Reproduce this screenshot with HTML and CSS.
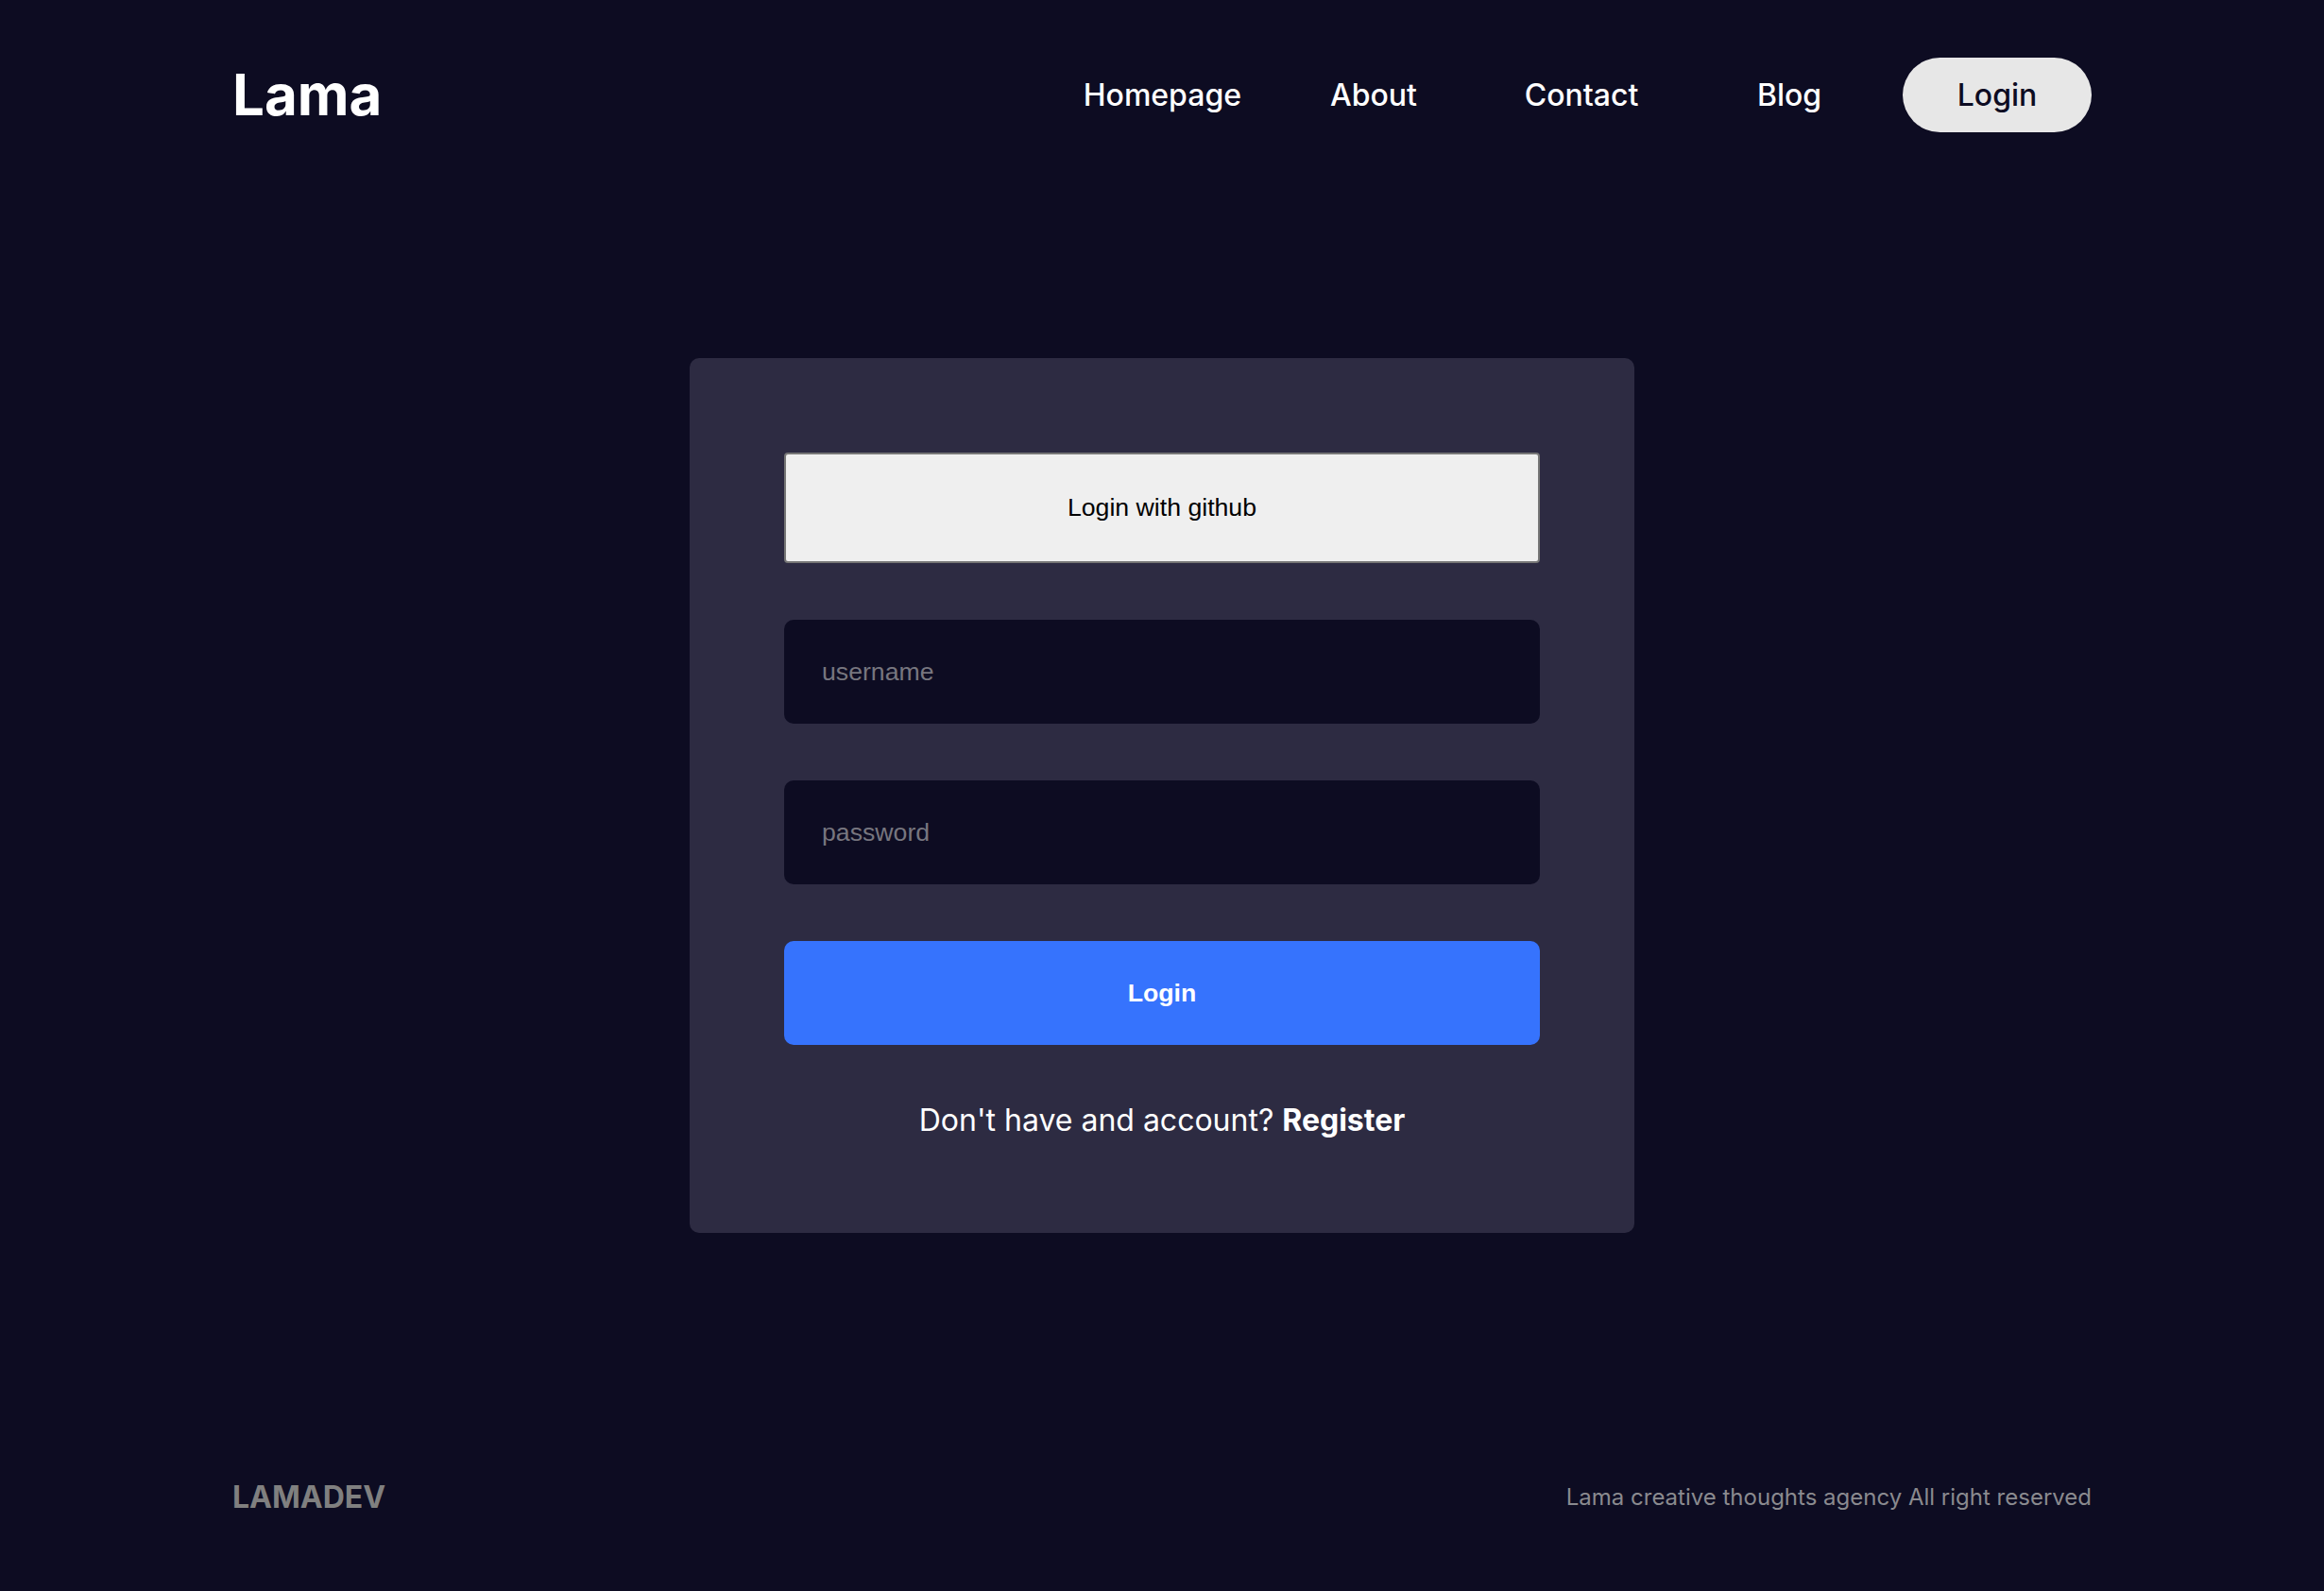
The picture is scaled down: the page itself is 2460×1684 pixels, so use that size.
FILE: index.html
```html
<!DOCTYPE html>
<html lang="en">
<head>
    <meta charset="UTF-8">
    <meta name="viewport" content="width=device-width, initial-scale=1.0">
    <title>Lama - Login</title>
    <link rel="stylesheet" href="styles.css">
</head>
<body>
    <div class="container">

        <header class="navbar">
            <a href="#" class="logo">Lama</a>
            <nav class="links">
                <a href="#" class="link">Homepage</a>
                <a href="#" class="link">About</a>
                <a href="#" class="link">Contact</a>
                <a href="#" class="link">Blog</a>
                <a href="#" class="link active">Login</a>
            </nav>
        </header>

        <main class="main">
            <div class="card">
                <form class="github-form">
                    <button type="button" class="github">Login with github</button>
                </form>
                <form class="login-form">
                    <input type="text" placeholder="username">
                    <input type="password" placeholder="password">
                    <button type="button" class="submit">Login</button>
                    <p class="register">Don't have and account? <b>Register</b></p>
                </form>
            </div>
        </main>

        <footer class="footer">
            <div class="footer-logo">LAMADEV</div>
            <div class="footer-text">Lama creative thoughts agency All right reserved</div>
        </footer>

    </div>
</body>
</html>
```

FILE: styles.css
```css
* {
    box-sizing: border-box;
}
body {
    margin: 0;
    background-color: #0d0c22; /* 深藍底色 */
    color: #ffffff;
    font-family: Inter, "Liberation Sans", sans-serif;
    font-size: 32px;
}
a {
    color: inherit;
    text-decoration: none;
}
.container {
    padding: 0 246px;
    min-height: 100vh;
}

/* 導覽列 */
.navbar {
    height: 200px;
    display: flex;
    align-items: center;
    justify-content: space-between;
}
.logo {
    font-size: 60px;
    font-weight: bold;
}
.links {
    display: flex;
    align-items: center;
    gap: 20px;
}
.link {
    min-width: 200px;
    padding: 20px;
    border-radius: 40px;
    text-align: center;
    font-weight: 500;
}
.link.active {
    background-color: #e7e7e7;
    color: #0d0c22;
}

/* 主內容 */
.main {
    min-height: calc(100vh - 400px);
    display: flex;
    align-items: center;
    justify-content: center;
}
.card {
    width: 1000px;
    padding: 100px;
    background-color: #2d2b42;
    border-radius: 10px;
    display: flex;
    flex-direction: column;
    gap: 60px;
}
.github {
    width: 100%;
    padding: 41px 20px;
    border: 2px solid #767676;
    border-radius: 4px;
    background-color: #efefef;
    color: #000000;
    font-family: "Liberation Sans", Arial, sans-serif;
    font-size: 26.67px;
    line-height: 31px;
    cursor: pointer;
}
.login-form {
    display: flex;
    flex-direction: column;
    gap: 60px;
}
.login-form input {
    height: 110px;
    padding: 40px;
    border: none;
    border-radius: 10px;
    background-color: #0d0c22;
    color: #ffffff;
    font-family: "Liberation Sans", Arial, sans-serif;
    font-size: 26.67px;
    line-height: 30px;
    outline: none;
}
.login-form input::placeholder {
    color: #77767f;
}
.submit {
    height: 110px;
    padding: 40px;
    border: none;
    border-radius: 10px;
    background-color: #3673fd; /* 藍色按鈕 */
    color: #ffffff;
    font-family: "Liberation Sans", Arial, sans-serif;
    font-size: 26.67px;
    font-weight: bold;
    cursor: pointer;
}
.register {
    margin: 0;
    text-align: center;
}

/* 頁尾 */
.footer {
    height: 200px;
    display: flex;
    align-items: center;
    justify-content: space-between;
    color: #808080;
}
.footer-logo {
    font-weight: bold;
}
.footer-text {
    font-size: 24px;
    color: #8a8a8f;
}
```
